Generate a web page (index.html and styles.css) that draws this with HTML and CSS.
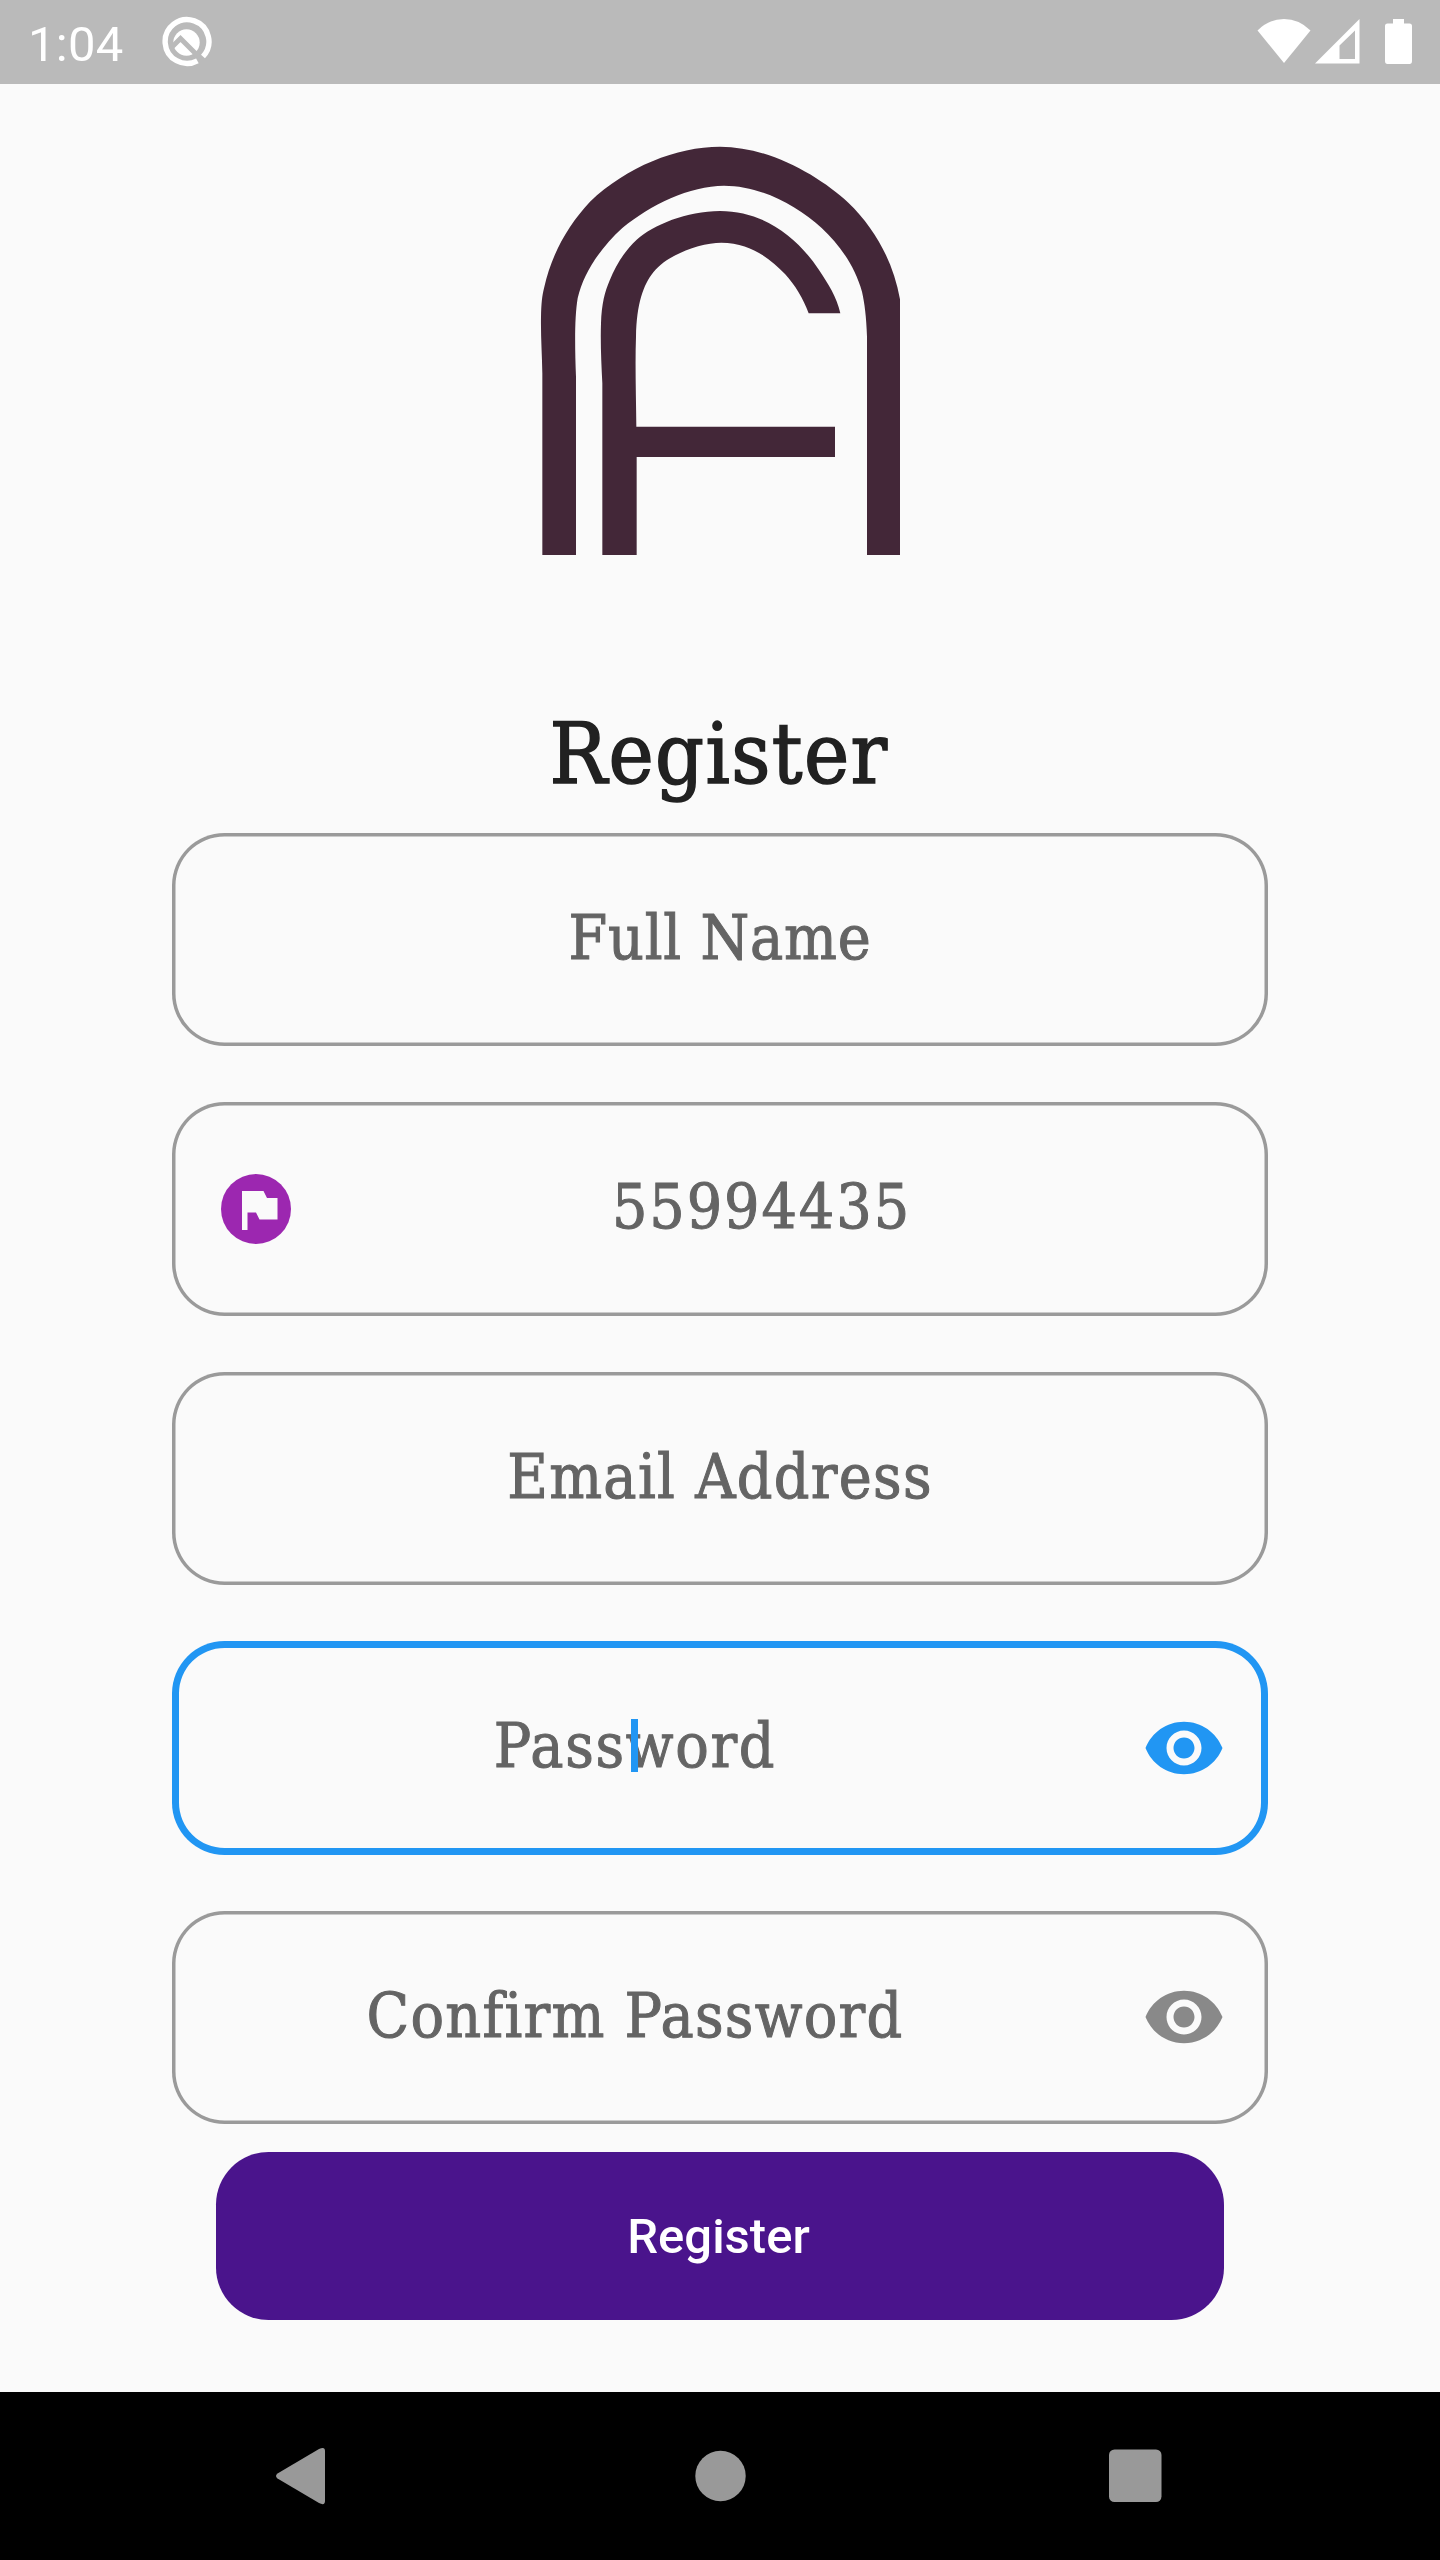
FILE: index.html
```html
<!DOCTYPE html>
<html lang="en">
<head>
<meta charset="utf-8">
<title>Register</title>
<link rel="stylesheet" href="styles.css">
</head>
<body>
<div class="screen">
  <header class="status-bar">
    <span class="clock">1:04</span>
    <svg class="status-q" viewBox="0 0 52 52" width="52" height="52">
      <path d="M43 40.5A21.9 21.9 0 1 0 37.4 44.8" fill="none" stroke="#fff" stroke-width="5.4"/>
      <circle cx="26.5" cy="26.5" r="13.2" fill="#fff"/>
      <path d="M12 31L20.5 22.5L38 40" fill="none" stroke="#bababa" stroke-width="5"/>
    </svg>
    <div class="status-icons">
      <svg viewBox="0 0 54 46" width="54" height="46"><path d="M0.5 12.5Q12 1 27 1T53.500 12.500L27 45Z" fill="#fff"/></svg>
      <svg class="signal" viewBox="0 0 45 46" width="45" height="46"><path fill-rule="evenodd" d="M0 45.500L44.500 1V45.500ZM24.500 27.500V41H40V12.500Z" fill="#fff"/></svg>
      <svg class="battery" viewBox="0 0 27 46" width="27" height="46"><path d="M8 1H19V5.500H24.500Q27 5.500 27 8V43Q27 46 24.500 46H2.500Q0 46 0 43V8Q0 5.500 2.500 5.500H8Z" fill="#fff"/></svg>
    </div>
  </header>

  <main class="content">
    <svg class="logo" viewBox="0 0 1200 1320" width="400" height="440" fill="#432738">
      <path d="M67 1275V730C66 670 62 620 63 560C64 520 66 500 72 475C95 370 145 285 210 215C320 110 470 50 600 50C750 50 900 140 985 218C1065 295 1120 395 1140 508V1275H1041V620C1039 560 1034 520 1026 485C1005 410 960 345 905 294C830 225 720 167 612 167C510 167 390 225 307 294C240 355 190 430 173 505C164 560 164 640 168 740V1275Z"/>
      <path d="M247 1275V760C244 700 241 640 243 580C245 520 255 485 268 454C290 400 315 362 350 329C400 285 500 243 600 243C730 243 830 320 895 417C925 462 950 500 961 550H866C850 505 825 465 795 432C750 385 690 338 604 338C540 338 440 375 400 427C370 465 350 520 348 620C345 700 348 790 349 890H945V981H350V1275Z"/>
    </svg>
    <h1 class="title">Register</h1>

    <form class="form">
      <div class="field"><span class="hint hint-name">Full Name</span></div>
      <div class="field">
        <svg class="flag" viewBox="0 0 70 70" width="70" height="70">
          <circle cx="35" cy="35" r="35" fill="#9c27b0"/>
          <path d="M21 17H42.500L46 24H56.500V45.500H38.500L35 38.500H26.500V56H21Z" fill="#fafafa"/>
        </svg>
        <span class="hint hint-phone">55994435</span>
      </div>
      <div class="field"><span class="hint hint-email">Email Address</span></div>
      <div class="field focused">
        <span class="hint hint-password">Password<i class="caret"></i></span>
        <svg class="eye" viewBox="0 0 24 24" width="84" height="84"><path d="M12 4.500C7 4.500 2.730 7.610 1 12c1.730 4.390 6 7.500 11 7.500s9.270-3.110 11-7.500c-1.730-4.390-6-7.500-11-7.500zM12 17c-2.760 0-5-2.240-5-5s2.240-5 5-5 5 2.240 5 5-2.240 5-5 5zm0-8c-1.660 0-3 1.340-3 3s1.340 3 3 3 3-1.340 3-3-1.340-3-3-3z"/></svg>
      </div>
      <div class="field">
        <span class="hint hint-confirm">Confirm Password</span>
        <svg class="eye" viewBox="0 0 24 24" width="84" height="84"><path d="M12 4.500C7 4.500 2.730 7.610 1 12c1.730 4.390 6 7.500 11 7.500s9.270-3.110 11-7.500c-1.730-4.390-6-7.500-11-7.500zM12 17c-2.760 0-5-2.240-5-5s2.240-5 5-5 5 2.240 5 5-2.240 5-5 5zm0-8c-1.660 0-3 1.340-3 3s1.340 3 3 3 3-1.340 3-3-1.340-3-3-3z"/></svg>
      </div>
      <button class="submit" type="button">Register</button>
    </form>
  </main>

  <nav class="nav-bar">
    <svg viewBox="0 0 60 60" width="60" height="60"><path d="M7.500 27.500L49 3Q55 0 55 5V55Q55 60 49 57L7.500 32.500Q4.500 30 7.500 27.500Z" fill="#999"/></svg>
    <svg viewBox="0 0 60 60" width="60" height="60"><circle cx="32.500" cy="30" r="25.200" fill="#999"/></svg>
    <svg viewBox="0 0 60 60" width="60" height="60"><rect x="4" y="3.500" width="52.500" height="52.500" rx="5.500" fill="#999"/></svg>
  </nav>
</div>
</body>
</html>
```
FILE: styles.css
```css
* { box-sizing: border-box; }

body { margin: 0; background: #fafafa; }

.screen {
  display: flex;
  flex-direction: column;
  width: 1440px;
  height: 2560px;
  background: #fafafa;
}

.screen svg { display: block; flex: none; }

.status-bar {
  display: flex;
  align-items: flex-start;
  height: 84px;
  padding: 0 28px;
  background: #bababa;
  color: #fff;
}

.clock {
  width: 132px;
  padding-top: 16px;
  font: 400 49px/58px Roboto, sans-serif;
  letter-spacing: 0.300px;
}

.status-q { margin-top: 15.500px; }

.status-icons {
  display: flex;
  margin: 18px 0 0 auto;
}

.signal { margin-left: 4px; }
.battery { margin-left: 25px; }

.content {
  display: flex;
  flex: 1;
  flex-direction: column;
  align-items: center;
  padding-top: 46px;
}

.title {
  height: 100px;
  margin: 134px 2px 0 0;
  color: #212121;
  font: 400 85px/100px "DejaVu Serif Condensed", "DejaVu Serif", serif;
  font-stretch: condensed;
  letter-spacing: 1.400px;
  -webkit-text-stroke: 1.500px #212121;
}

.form {
  display: flex;
  flex-direction: column;
  width: 1096px;
  margin-top: 28.500px;
  gap: 56px;
}

.field {
  display: flex;
  align-items: center;
  height: 213.500px;
  padding: 0 42px;
  border-radius: 52.500px;
  box-shadow: inset 0 0 0 3.500px #9a9a9a;
}

.field.focused { box-shadow: inset 0 0 0 7px #2196f3; }

.hint {
  position: relative;
  flex: 1;
  padding-bottom: 3px;
  color: #646464;
  font: 400 62px/74px "DejaVu Serif Condensed", "DejaVu Serif", serif;
  font-stretch: condensed;
  text-align: center;
  white-space: nowrap;
  -webkit-text-stroke: 1px #646464;
}

.hint-name { letter-spacing: 0.800px; }
.hint-phone { letter-spacing: 1.900px; }
.hint-email { letter-spacing: 1.300px; }
.hint-password { letter-spacing: 1.700px; }
.hint-confirm { letter-spacing: 1.250px; }

.flag { margin: 0 6px 0 7px; }

.eye {
  margin-left: 86px;
  fill: #898989;
}

.focused .eye { fill: #2196f3; }

.caret {
  position: absolute;
  top: 10px;
  left: 417px;
  width: 7px;
  height: 53px;
  background: #2196f3;
}

.submit {
  height: 167.500px;
  margin: -28px 44px 0;
  padding: 3px 3px 0 0;
  border: 0;
  border-radius: 52.500px;
  background: #4a148c;
  color: #fff;
  font: 500 49px/58px Roboto, sans-serif;
}

.nav-bar {
  display: flex;
  align-items: center;
  justify-content: space-between;
  height: 168px;
  padding: 0 275px 0 270px;
  background: #000;
}
```
